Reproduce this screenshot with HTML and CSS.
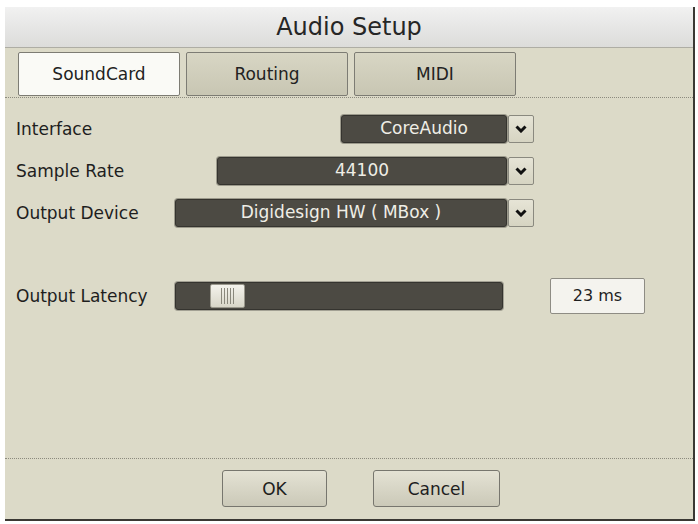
FILE: index.html
```html
<!DOCTYPE html>
<html lang="en">
<head>
  <meta charset="UTF-8">
  <title>Audio Setup</title>
  <link rel="stylesheet" href="styles.css">
</head>
<body>
  <div class="window">
    <div class="titlebar">Audio Setup</div>
    <div class="tabs">
      <button class="tab tab-active">SoundCard</button>
      <button class="tab">Routing</button>
      <button class="tab">MIDI</button>
    </div>
    <div class="panel">
      <div class="row">
        <div class="label">Interface</div>
        <div class="combo combo-short">
          <div class="combo-value">CoreAudio</div>
          <div class="combo-arrow"><svg width="12" height="8" viewBox="0 0 12 8"><polyline points="1.5,1.5 6,6 10.5,1.5" fill="none" stroke="#111" stroke-width="3"/></svg></div>
        </div>
      </div>
      <div class="row">
        <div class="label">Sample Rate</div>
        <div class="combo combo-mid">
          <div class="combo-value">44100</div>
          <div class="combo-arrow"><svg width="12" height="8" viewBox="0 0 12 8"><polyline points="1.5,1.5 6,6 10.5,1.5" fill="none" stroke="#111" stroke-width="3"/></svg></div>
        </div>
      </div>
      <div class="row">
        <div class="label">Output Device</div>
        <div class="combo combo-long">
          <div class="combo-value">Digidesign HW ( MBox )</div>
          <div class="combo-arrow"><svg width="12" height="8" viewBox="0 0 12 8"><polyline points="1.5,1.5 6,6 10.5,1.5" fill="none" stroke="#111" stroke-width="3"/></svg></div>
        </div>
      </div>
      <div class="latency-row">
        <div class="latency-label">Output Latency</div>
        <div class="track">
          <div class="thumb"><span class="grip"></span></div>
        </div>
        <div class="latency-value">23 ms</div>
      </div>
    </div>
    <div class="footer">
      <button class="btn btn-ok">OK</button>
      <button class="btn btn-cancel">Cancel</button>
    </div>
  </div>
</body>
</html>
```
FILE: styles.css
```css
body {
  margin: 0;
  background: #fff;
  font-family: 'DejaVu Sans', sans-serif;
}
.window {
  width: 690px;
  height: 514px;
  margin: 7px 0 0 5px;
  box-sizing: border-box;
  background: #dcdac8;
  border-right: 2px solid #3a3833;
  border-bottom: 2px solid #3a3833;
  display: flex;
  flex-direction: column;
}
.titlebar {
  height: 41px;
  box-sizing: border-box;
  border-bottom: 1px solid #aeada4;
  background: linear-gradient(#f1f1f1, #dcdcda);
  text-align: center;
  font-size: 24px;
  line-height: 40px;
  color: #262626;
}
.tabs {
  display: flex;
  gap: 6px;
  padding: 4px 0 1px 13px;
  border-bottom: 1px dotted #8c8a7e;
}
.tab {
  width: 162px;
  height: 44px;
  box-sizing: border-box;
  border: 1px solid #7d7c74;
  border-radius: 2px;
  background: linear-gradient(#d8d6c4, #c8c6b3);
  font-family: 'DejaVu Sans', sans-serif;
  font-size: 17px;
  color: #222;
  padding: 0;
  margin: 0;
}
.tab-active {
  background: #fafaf6;
}
.panel {
  flex: 1;
  display: flex;
  flex-direction: column;
  gap: 14px;
  padding: 17px 0 0 11px;
}
.row {
  width: 518px;
  height: 28px;
  display: flex;
  align-items: center;
}
.label,
.latency-label {
  flex: 1;
  font-size: 17px;
  color: #1e1e1e;
}
.combo {
  display: flex;
  height: 28px;
}
.combo-short { width: 193px; }
.combo-mid { width: 317px; }
.combo-long { width: 359px; }
.combo-value {
  flex: 1;
  box-sizing: border-box;
  background: #4c4a43;
  border: 1px solid #35342f;
  border-radius: 3px;
  box-shadow: 0 0 0 1px #9c9a8c;
  color: #efeee6;
  font-size: 17px;
  line-height: 25px;
  text-align: center;
}
.combo-arrow {
  width: 26px;
  margin-left: 1px;
  box-sizing: border-box;
  border: 1px solid #8a897f;
  border-radius: 2px;
  background: linear-gradient(#e6e4d6, #d6d4c2);
  display: flex;
  align-items: center;
  justify-content: center;
}
.latency-row {
  margin-top: 37px;
  height: 36px;
  display: flex;
  align-items: center;
}
.latency-label {
  flex: 0 0 159px;
}
.track {
  width: 328px;
  height: 28px;
  box-sizing: border-box;
  background: #4c4a43;
  border: 1px solid #35342f;
  border-radius: 3px;
  box-shadow: 0 0 0 1px #a3a194;
  display: flex;
  align-items: center;
  padding-left: 34px;
}
.thumb {
  width: 35px;
  height: 24px;
  box-sizing: border-box;
  border: 1px solid #9a988c;
  border-radius: 2px;
  background: linear-gradient(#f4f3ec, #d8d6c8);
  display: flex;
  align-items: center;
  justify-content: center;
}
.grip {
  width: 13px;
  height: 16px;
  background: repeating-linear-gradient(90deg, #8a887c 0 1px, transparent 1px 3px);
}
.latency-value {
  margin-left: 47px;
  width: 95px;
  height: 36px;
  box-sizing: border-box;
  border: 1px solid #8e8c84;
  border-radius: 2px;
  background: #f4f3ee;
  font-size: 16px;
  line-height: 34px;
  text-align: center;
  color: #1e1e1e;
}
.footer {
  display: flex;
  gap: 46px;
  padding: 11px 0 12px 217px;
  border-top: 1px dotted #8c8a7e;
}
.btn {
  height: 37px;
  box-sizing: border-box;
  border: 1px solid #77766e;
  border-radius: 3px;
  background: linear-gradient(#e4e2d4, #cbc9b8);
  font-family: 'DejaVu Sans', sans-serif;
  font-size: 17px;
  color: #1e1e1e;
  padding: 0;
  margin: 0;
}
.btn-ok { width: 105px; }
.btn-cancel { width: 127px; }
```
